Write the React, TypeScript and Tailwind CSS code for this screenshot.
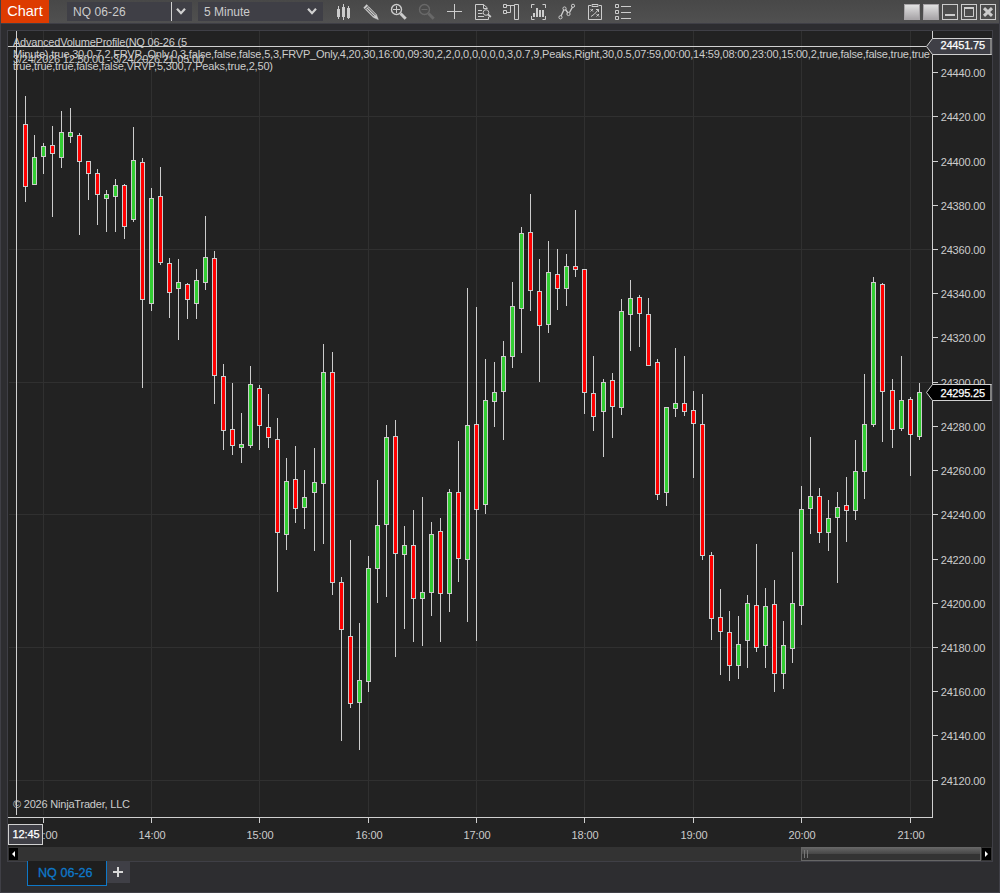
import React from "react";

type Candle = [number, number, number, number, number, 0 | 1];

// x, high, body top, body bottom, low, rising
const candles: Candle[] = [
  [25, 96, 124, 187, 202, 0], [34, 135, 157, 185, 185, 1], [43, 143, 146, 157, 174, 1], [52, 126, 145, 154, 217, 0],
  [61, 111, 132, 158, 168, 1], [70, 108, 132, 137, 143, 1], [79, 133, 135, 162, 235, 0], [88, 161, 161, 174, 200, 0],
  [97, 169, 173, 195, 225, 0], [106, 190, 194, 199, 232, 1], [115, 179, 185, 197, 232, 1], [124, 184, 185, 227, 239, 0],
  [133, 127, 160, 220, 222, 1], [142, 158, 162, 300, 388, 0], [151, 188, 198, 304, 311, 1], [160, 167, 196, 263, 265, 0],
  [169, 258, 263, 293, 318, 0], [178, 259, 282, 289, 340, 1], [187, 283, 284, 300, 319, 0], [196, 269, 280, 304, 319, 1],
  [205, 216, 257, 283, 290, 1], [214, 251, 258, 376, 404, 0], [223, 364, 376, 431, 450, 0], [232, 383, 429, 446, 455, 0],
  [241, 413, 444, 448, 463, 1], [250, 366, 384, 446, 448, 1], [259, 385, 388, 426, 450, 0], [268, 394, 427, 438, 448, 0],
  [277, 418, 439, 533, 592, 0], [286, 458, 481, 535, 550, 1], [295, 446, 479, 509, 523, 0], [304, 470, 497, 508, 529, 1],
  [314, 448, 482, 493, 551, 1], [323, 344, 372, 484, 544, 1], [332, 352, 372, 583, 595, 0], [341, 577, 582, 630, 741, 0],
  [350, 540, 636, 704, 708, 0], [359, 623, 680, 703, 750, 1], [368, 556, 568, 682, 692, 1], [377, 480, 525, 569, 603, 1],
  [386, 425, 437, 525, 597, 1], [395, 420, 436, 554, 657, 0], [404, 526, 545, 555, 629, 1], [413, 510, 545, 599, 642, 0],
  [422, 497, 592, 599, 646, 1], [431, 522, 534, 593, 616, 1], [440, 518, 531, 594, 642, 0], [449, 489, 492, 594, 612, 1],
  [458, 441, 492, 559, 582, 0], [467, 288, 425, 560, 622, 1], [476, 307, 424, 510, 641, 0], [485, 359, 400, 505, 514, 1],
  [494, 362, 392, 402, 427, 1], [503, 341, 356, 392, 440, 1], [512, 282, 306, 357, 368, 1], [521, 227, 233, 309, 353, 1],
  [530, 194, 232, 291, 311, 0], [539, 259, 291, 326, 382, 0], [548, 241, 272, 325, 333, 1], [557, 249, 274, 289, 310, 0],
  [566, 254, 266, 289, 306, 1], [575, 210, 266, 270, 277, 0], [584, 269, 269, 393, 414, 0], [593, 356, 393, 417, 431, 0],
  [603, 379, 382, 412, 457, 1], [612, 373, 380, 407, 438, 0], [621, 299, 311, 408, 415, 1], [630, 280, 298, 315, 351, 1],
  [639, 295, 297, 314, 347, 0], [648, 298, 314, 366, 366, 0], [657, 359, 362, 495, 500, 0], [666, 407, 407, 493, 506, 1],
  [675, 348, 403, 409, 417, 1], [684, 356, 403, 412, 416, 0], [693, 391, 410, 424, 478, 0], [702, 394, 424, 556, 560, 0],
  [711, 552, 555, 619, 640, 0], [720, 589, 617, 632, 675, 0], [729, 611, 632, 666, 681, 0], [738, 616, 644, 666, 679, 1],
  [747, 595, 603, 641, 668, 1], [756, 544, 605, 648, 652, 0], [765, 588, 606, 646, 668, 1], [774, 580, 604, 674, 692, 0],
  [783, 621, 645, 674, 689, 1], [792, 552, 603, 649, 663, 1], [801, 486, 509, 606, 625, 1], [810, 437, 496, 509, 534, 1],
  [819, 488, 496, 533, 543, 0], [828, 500, 518, 533, 551, 1], [837, 492, 507, 518, 583, 1], [846, 477, 505, 511, 542, 0],
  [855, 440, 471, 511, 520, 1], [864, 374, 424, 472, 499, 1], [873, 277, 282, 425, 427, 1], [882, 283, 284, 392, 442, 0],
  [892, 379, 390, 430, 448, 0], [901, 356, 400, 429, 431, 1], [910, 397, 399, 435, 476, 0], [919, 383, 392, 437, 440, 1],
];

const prices: [string, number][] = [
  ["24440.00", 72], ["24420.00", 116], ["24400.00", 161], ["24380.00", 205], ["24360.00", 249], ["24340.00", 293],
  ["24320.00", 337], ["24300.00", 382], ["24280.00", 426], ["24260.00", 470], ["24240.00", 514], ["24220.00", 559],
  ["24200.00", 603], ["24180.00", 647], ["24160.00", 691], ["24140.00", 735], ["24120.00", 780],
];

const times: [string, number][] = [
  ["13:00", 43], ["14:00", 151], ["15:00", 259], ["16:00", 368], ["17:00", 476], ["18:00", 584], ["19:00", 693],
  ["20:00", 801], ["21:00", 910],
];

function PriceTag({ y, baseline, text, fill }: { y: number; baseline: number; text: string; fill: string }) {
  return (
    <g>
      <path d={`M926.5 ${y + 0.5} L932.5 ${y - 7.5} H991.5 V${y + 8.5} H932.5 Z`} fill={fill} stroke="#d0d0d0" />
      <rect x="990" y={y - 7} width="2" height="15" fill="#808080" />
      <text x="940.5" y={baseline} fill="#ffffff" stroke="#ffffff" strokeWidth="0.25" textLength="44.5">{text}</text>
    </g>
  );
}

function Chart() {
  return (
    <svg className="block" width="984" height="816" viewBox="8 31 984 816" fontFamily="'Liberation Sans', Arial, sans-serif" fontSize="11">
      <g fill="#303030" shapeRendering="crispEdges">
        {times.map(([t, x]) => <rect key={t} x={x} y={31} width="1" height="784" />)}
        {[116, 249, 382, 514, 647, 780].map((y) => <rect key={y} x={9} y={y} width="922" height="1" />)}
      </g>
      <g fill="#cccccc">
        <text x="13" y="46" textLength="174">AdvancedVolumeProfile(NQ 06-26 (5</text>
        <text x="13" y="58" textLength="917">Minute),true,30,0.7,2,FRVP_Only,0,3,false,false,false,5,3,FRVP_Only,4,20,30,16:00,09:30,2,2,0,0,0,0,0,0,3,0.7,9,Peaks,Right,30,0.5,07:59,00:00,14:59,08:00,23:00,15:00,2,true,false,false,true,true</text>
        <text x="13" y="63" textLength="191">3/24/2026 12:50:00 - 3/24/2026 21:05:00</text>
        <text x="13" y="70" textLength="260">true,true,true,false,false,VRVP,5,300,7,Peaks,true,2,50)</text>
        <text x="13" y="808" textLength="117">© 2026 NinjaTrader, LLC</text>
        {prices.map(([t, y]) => <text key={t} x="940.7" y={y + 5} textLength="44.7">{t}</text>)}
        {times.map(([t, x]) => <text key={t} x={x + 1} y="839" textAnchor="middle" textLength="27">{t}</text>)}
      </g>
      <g shapeRendering="crispEdges">
        {candles.map(([x, high, top, bottom, low, up]) => (
          <g key={x}>
            <rect x={x} y={high} width="1" height={low - high} fill="#cccccc" />
            <rect x={x - 2} y={top} width="5" height={bottom - top} fill="#cccccc" />
            <rect x={x - 1} y={top + 1} width="3" height={bottom - top - 2} fill={up ? "#32cd32" : "#ff0000"} />
          </g>
        ))}
      </g>
      <g fill="#d0d0d0" shapeRendering="crispEdges">
        <rect x="932" y="31" width="1" height="787" />
        <rect x="8" y="817" width="925" height="1" />
        {prices.map(([t, y]) => <rect key={t} x="933" y={y} width="5" height="1" />)}
        {times.map(([t, x]) => <rect key={t} x={x} y="818" width="1" height="5" />)}
        <rect x="8" y="46" width="918" height="1" />
        <rect x="16" y="31" width="1" height="784" />
      </g>
      <PriceTag y={46} baseline={49} text="24451.75" fill="#3f3f46" />
      <PriceTag y={392} baseline={397} text="24295.25" fill="#000000" />
      <rect x="8.5" y="824.5" width="34" height="20" fill="#3f3f46" stroke="#d0d0d0" />
      <text x="12.5" y="838" fill="#ffffff" stroke="#ffffff" strokeWidth="0.25" textLength="27">12:45</text>
    </svg>
  );
}

function Icon({ children, color = "#cccccc" }: { children: React.ReactNode; color?: string }) {
  return (
    <svg className="block shrink-0" width="28" height="23" viewBox="0 0 28 23" fill="none" stroke={color} color={color}>
      {children}
    </svg>
  );
}

function Toolbar() {
  return (
    <>
      <Icon>
        <g fill="currentColor" stroke="none">
          <rect x="8" y="9" width="3" height="8" /><rect x="9" y="6" width="1" height="13" />
          <rect x="13" y="7" width="3" height="10" /><rect x="14" y="4" width="1" height="16" />
          <rect x="18" y="8" width="3" height="10" /><rect x="19" y="6" width="1" height="13" />
        </g>
      </Icon>
      <Icon>
        <path d="M8 6 L17.8 15.8" strokeWidth="4.6" />
        <path d="M9.4 8.7 L17 16.3 M10.9 7.4 L18.5 15 M8 9.4 L11.2 6.2" stroke="#4b4b4b" strokeWidth="1" />
        <path d="M16.4 17.4 L19.4 14.4 L21.3 19.6 Z" fill="currentColor" strokeWidth="0.5" />
      </Icon>
      <Icon>
        <circle cx="11.5" cy="9.5" r="5" strokeWidth="1.4" />
        <path d="M11.5 6 V13 M8 9.5 H15" />
        <path d="M15.5 13.5 L20.7 18.7" strokeWidth="3" />
      </Icon>
      <Icon color="#686868">
        <circle cx="11.5" cy="9.5" r="5" strokeWidth="1.4" />
        <path d="M8.5 9.5 H14.5" />
        <path d="M15.5 13.5 L20.7 18.7" strokeWidth="3" />
      </Icon>
      <Icon><path d="M6 11.5 H21 M13.5 4 V19" /></Icon>
      <Icon>
        <path d="M19.5 17 V19.5 H6.5 V4.5 H14.5 L18.5 8 M14.5 4.5 V8.5 H18.5 M9 10.5 H13 M9 13.5 H13.5 M9 16.5 H15" />
        <circle cx="17" cy="12.5" r="2.8" />
        <path d="M19 14.5 L21.8 17" strokeWidth="2" />
      </Icon>
      <Icon>
        <path d="M6.5 4.5 H9.5 V7.5 H6.5 Z M6.5 10.5 H9.5 V13.5 H6.5 Z M17.5 4.5 H21.5 V19.5 H17.5 Z M10 5.5 H17 M10 12.5 H13.5 V5.5" />
      </Icon>
      <Icon>
        <path d="M9.5 4.5 H6.5 V8 M17.5 4.5 H20.5 V8 M9.5 19.5 H6.5 V16 M17.5 19.5 H20.5 V16" />
        <g fill="currentColor" stroke="none">
          <rect x="8" y="13" width="2" height="4" /><rect x="11" y="8" width="2" height="9" />
          <rect x="14" y="10" width="2" height="7" /><rect x="17" y="10" width="2" height="7" />
        </g>
      </Icon>
      <Icon>
        <path d="M8 16 L11 9.5 M12.5 9.5 L15 13 M16.5 12.5 L19.5 7" strokeWidth="1.4" />
        <circle cx="7.5" cy="17.3" r="1.6" /><circle cx="11.5" cy="8.5" r="1.6" />
        <circle cx="15.5" cy="14" r="1.6" /><circle cx="20" cy="5.8" r="1.6" />
      </Icon>
      <Icon>
        <path d="M10 5.5 H7.5 V19.5 H20.5 V5.5 H18 M11 4.5 H17 V6.5 H11 Z" />
        <path d="M9.5 9 L12 11.5 M12 9 L9.5 11.5 M15.5 14 L18 16.5 M18 14 L15.5 16.5 M10 16.5 L13.5 14 L17.5 9.5 M15 9.5 H17.5 V12" />
      </Icon>
      <Icon>
        <path d="M6.5 4.5 H9.5 V7.5 H6.5 Z M6.5 10.5 H9.5 V13.5 H6.5 Z M6.5 16.5 H9.5 V19.5 H6.5 Z M12 6.5 H22 M12 12.5 H22 M12 18.5 H22" />
      </Icon>
    </>
  );
}

function Chevron() {
  return (
    <svg className="block" width="10" height="7" viewBox="0 0 10 7" fill="none" stroke="#d0d0d0" strokeWidth="2.2">
      <path d="M1 0.8 L5 5.2 L9 0.8" />
    </svg>
  );
}

function WindowButtons() {
  return (
    <div className="ml-auto mr-[3px] flex gap-[3px] pt-1">
      <div className="size-4 border border-[#a8a5a8] bg-linear-to-b from-[#e2e2e2] to-[#a8a5a8]" />
      <div className="size-4 border border-[#a8a5a8] bg-linear-to-b from-[#e2e2e2] to-[#a8a5a8]" />
      <svg width="16" height="16" fill="none" stroke="#cccccc"><rect x="0.5" y="0.5" width="15" height="15" /><path d="M3 11 H13" strokeWidth="2" /></svg>
      <svg width="16" height="16" fill="none" stroke="#cccccc"><rect x="0.5" y="0.5" width="15" height="15" /><path d="M3.5 5 V12.5 H12.5 V5" /><path d="M3 4 H13" strokeWidth="2" /></svg>
      <svg width="16" height="16" fill="none" stroke="#cccccc"><rect x="0.5" y="0.5" width="15" height="15" /><path d="M4 4.2 L12 11.8 M12 4.2 L4 11.8" strokeWidth="3" /></svg>
    </div>
  );
}

export default function App() {
  return (
    <div className="flex h-[893px] w-[1000px] flex-col overflow-hidden border-x border-b border-[#3f3f46] bg-[#2d2d30] font-['Liberation_Sans',Arial,sans-serif] text-[12px] text-[#cccccc]">
      <header className="flex h-6 shrink-0 items-start border-b border-[#3f3f46] bg-linear-to-b from-[#484848] to-[#505050]">
        <div className="flex h-[23px] w-12 items-center justify-center bg-[#dd3b00] text-[14.5px] leading-none text-white">Chart</div>
        <div className="mt-0.5 ml-[18px] flex h-[19px] w-[125px] items-center bg-[#3f3f46]">
          <span className="w-[104px] pl-1.5 text-[12px] leading-none tracking-[0.08px]">NQ 06-26</span>
          <span className="h-full w-px bg-[#d0d0d0]" />
          <span className="ml-1"><Chevron /></span>
        </div>
        <div className="mt-0.5 ml-1.5 flex h-[19px] w-[125px] items-center justify-between bg-[#3f3f46] pr-1.5 pl-1.5">
          <span className="leading-none">5 Minute</span>
          <Chevron />
        </div>
        <nav className="ml-[6px] flex"><Toolbar /></nav>
        <WindowButtons />
      </header>

      <main className="mt-1.5 ml-1.5 flex h-[832px] w-[986px] shrink-0 flex-col border border-[#3f3f46] bg-[#222222]">
        <Chart />
        <div className="flex h-[14px] items-stretch bg-[#333333]">
          <div className="my-px ml-px flex w-[9px] items-center justify-center bg-black">
            <svg width="3" height="6" viewBox="0 0 3 6"><path d="M3 0 V6 L0 3 Z" fill="#fff" /></svg>
          </div>
          <div className="ml-auto flex w-[180px] items-center gap-0.5 border border-[#666666] bg-linear-to-b from-[#646464] from-0% via-[#464646] via-50% to-[#333333] to-50% pl-0.5">
            <span className="h-2 w-px bg-[#777777]" />
            <span className="h-2 w-px bg-[#777777]" />
          </div>
          <div className="my-px mr-px ml-px flex w-[9px] items-center justify-center bg-black">
            <svg width="3" height="6" viewBox="0 0 3 6"><path d="M0 0 V6 L3 3 Z" fill="#fff" /></svg>
          </div>
        </div>
      </main>

      <footer className="-mt-px ml-[26px] flex items-start">
        <div className="flex h-[25px] w-20 items-center border-x border-b border-[#0e78c8] bg-[#1e1e1e] pl-2.5 text-[12.6px] leading-none text-[#0e78c8] [-webkit-text-stroke:0.3px]">NQ 06-26</div>
        <div className="mt-px flex h-[21px] w-[23px] items-center bg-[#3f3f46] pl-1.5">
          <svg className="-mt-px" width="10" height="10" stroke="#d8d8d8" strokeWidth="2"><path d="M0 5 H10 M5 0 V10" /></svg>
        </div>
      </footer>
    </div>
  );
}
